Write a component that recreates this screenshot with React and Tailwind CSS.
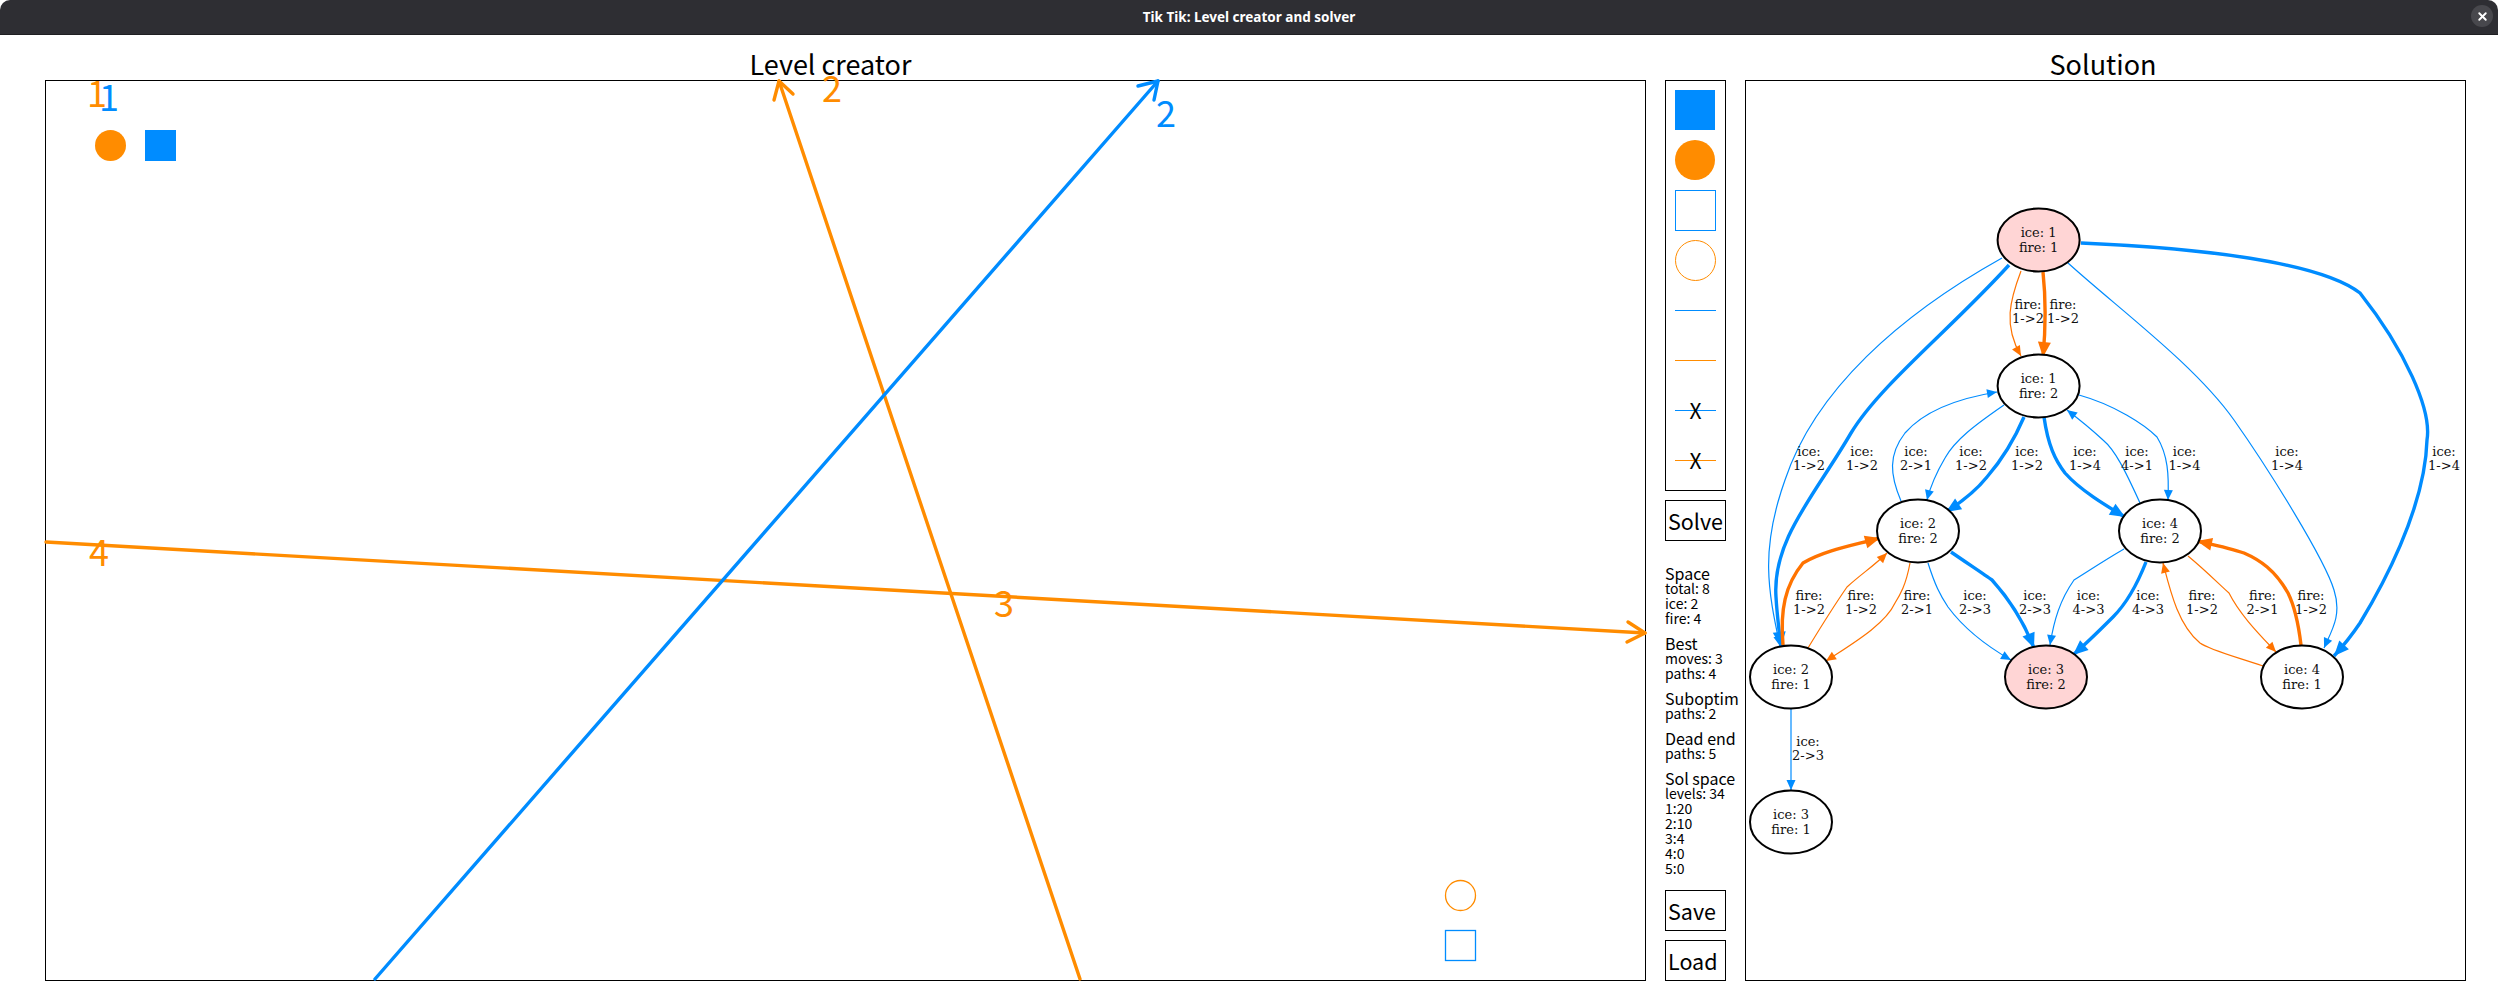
import React from "react"
import { X } from "lucide-react"

const BLUE = "#008cff"
const ORANGE = "#ff8c00"
const EDGE_ORANGE = "#ff7300"

// graph edges: colour, thick?, path
const edges = [
  ["b", 0, "M2002 258 C1900 315 1815 390 1785 480 C1760 550 1768 590 1780 646"],
  ["b", 1, "M2009 265 C1950 330 1880 385 1851 433 C1815 495 1772 540 1776 597 C1777 615 1779 630 1781 647"],
  ["o", 0, "M2021 271 C2010 300 2003 325 2021 356"],
  ["o", 1, "M2043 272 C2046 300 2046 325 2043 357"],
  ["b", 0, "M2068 263 C2120 310 2195 365 2234 420 C2270 471 2325 560 2334 590 C2342 615 2332 630 2324 648"],
  ["b", 1, "M2081 243 C2200 248 2320 262 2360 293 C2405 350 2432 410 2427 440 C2425 510 2380 590 2360 623 C2352 635 2344 645 2334 656"],
  ["b", 0, "M1901 501 C1890 475 1888 455 1905 433 C1925 410 1960 398 1997 392"],
  ["b", 0, "M2004 405 C1975 425 1955 440 1945 458 C1935 475 1930 488 1927 500"],
  ["b", 1, "M2024 417 C2012 445 2000 462 1987 477 C1975 492 1960 503 1946 512"],
  ["b", 1, "M2044 417 C2048 445 2055 460 2065 473 C2080 490 2105 505 2125 517"],
  ["b", 0, "M2140 503 C2125 470 2115 450 2103 440 C2090 428 2080 420 2067 410"],
  ["b", 0, "M2079 395 C2115 405 2145 425 2157 437 C2168 455 2169 475 2168 500"],
  ["o", 1, "M1783 645 C1780 610 1785 585 1803 563 C1825 550 1855 545 1880 538"],
  ["o", 0, "M1808 648 C1825 620 1838 600 1847 587 C1860 575 1875 565 1887 553"],
  ["o", 0, "M1910 563 C1906 585 1900 595 1895 603 C1885 625 1850 645 1826 661"],
  ["b", 0, "M1928 563 C1935 585 1940 595 1948 607 C1965 630 1990 648 2011 660"],
  ["b", 1, "M1951 552 C1970 565 1985 575 1992 580 C2010 600 2025 625 2034 648"],
  ["b", 0, "M2124 549 C2105 560 2090 570 2074 580 C2060 600 2054 620 2050 645"],
  ["b", 1, "M2146 562 C2135 590 2125 605 2113 617 C2100 630 2088 642 2073 655"],
  ["o", 0, "M2263 666 C2230 655 2210 650 2200 643 C2178 625 2170 590 2163 563"],
  ["o", 0, "M2188 556 C2205 570 2220 585 2229 593 C2240 615 2260 635 2276 652"],
  ["o", 1, "M2301 645 C2298 620 2294 605 2288 593 C2275 570 2260 560 2244 553 C2230 548 2215 545 2197 541"],
  ["b", 0, "M1791 709 L1791 790"],
]

const nodes = [
  [2038.6, 240, "ice: 1", "fire: 1", true],
  [2038.6, 386, "ice: 1", "fire: 2", false],
  [1918, 531, "ice: 2", "fire: 2", false],
  [2160, 531, "ice: 4", "fire: 2", false],
  [1791, 677, "ice: 2", "fire: 1", false],
  [2046, 677, "ice: 3", "fire: 2", true],
  [2302, 677, "ice: 4", "fire: 1", false],
  [1791, 822, "ice: 3", "fire: 1", false],
]

const labels = [
  [1809, 452, "ice:", "1->2"],
  [1862, 452, "ice:", "1->2"],
  [1916, 452, "ice:", "2->1"],
  [1971, 452, "ice:", "1->2"],
  [2027, 452, "ice:", "1->2"],
  [2085, 452, "ice:", "1->4"],
  [2137, 452, "ice:", "4->1"],
  [2184.5, 452, "ice:", "1->4"],
  [2287, 452, "ice:", "1->4"],
  [2444, 452, "ice:", "1->4"],
  [2028, 305, "fire:", "1->2"],
  [2063, 305, "fire:", "1->2"],
  [1809, 596, "fire:", "1->2"],
  [1861, 596, "fire:", "1->2"],
  [1917, 596, "fire:", "2->1"],
  [1975, 596, "ice:", "2->3"],
  [2035, 596, "ice:", "2->3"],
  [2088.5, 596, "ice:", "4->3"],
  [2148, 596, "ice:", "4->3"],
  [2202, 596, "fire:", "1->2"],
  [2262.5, 596, "fire:", "2->1"],
  [2311, 596, "fire:", "1->2"],
  [1808, 742, "ice:", "2->3"],
]

const stats = [
  ["Space", "total: 8", "ice: 2", "fire: 4"],
  ["Best", "moves: 3", "paths: 4"],
  ["Suboptim", "paths: 2"],
  ["Dead end", "paths: 5"],
  ["Sol space", "levels: 34", "1:20", "2:10", "3:4", "4:0", "5:0"],
]

function Marker({ id, color, w, h }) {
  return (
    <marker id={id} markerUnits="userSpaceOnUse" markerWidth={w} markerHeight={h} refX={w} refY={h / 2} orient="auto" overflow="visible">
      <path d={`M0 0L${w} ${h / 2}L0 ${h}Z`} fill={color} />
    </marker>
  )
}

function CanvasDrawing() {
  return (
    <svg viewBox="46 81 1599 899" className="block w-full h-full overflow-visible" fill="none">
      <g stroke={ORANGE} strokeWidth="3.4" strokeLinecap="round" strokeLinejoin="round">
        <path d="M1080 979L779 81" />
        <path d="M774 100L779 81L793 94" />
        <path d="M46 542L1645 633" />
        <path d="M1628 622L1645 633L1627 642" />
      </g>
      <g stroke={BLUE} strokeWidth="3.4" strokeLinecap="round" strokeLinejoin="round">
        <path d="M375 979L1158 81" />
        <path d="M1138 86L1158 81L1154 100" />
      </g>
      <g fontFamily="'Noto Sans CJK SC', sans-serif" fontSize="36" textAnchor="middle">
        <text x="97" y="107" fill={ORANGE}>1</text>
        <text x="109" y="111" fill={BLUE}>1</text>
        <text x="832" y="102" fill={ORANGE}>2</text>
        <text x="1166" y="127" fill={BLUE}>2</text>
        <text x="1004" y="617" fill={ORANGE}>3</text>
        <text x="99" y="566" fill={ORANGE}>4</text>
      </g>
      <circle cx="110.5" cy="145.5" r="15.5" fill={ORANGE} />
      <rect x="145" y="130" width="31" height="31" fill={BLUE} />
      <circle cx="1460.5" cy="895.5" r="15" stroke={ORANGE} strokeWidth="1.3" />
      <rect x="1445.5" y="930.5" width="30" height="30" stroke={BLUE} strokeWidth="1.3" />
    </svg>
  )
}

function GraphDrawing() {
  return (
    <svg viewBox="1746 81 719 899" className="block w-full h-full" fill="none">
      <defs>
        <Marker id="b0" color={BLUE} w={10} h={9} />
        <Marker id="b1" color={BLUE} w={15} h={13} />
        <Marker id="o0" color={EDGE_ORANGE} w={10} h={9} />
        <Marker id="o1" color={EDGE_ORANGE} w={15} h={13} />
      </defs>
      {edges.map(([c, thick, d], i) => (
        <path
          key={i}
          d={d}
          stroke={c === "b" ? BLUE : EDGE_ORANGE}
          strokeWidth={thick ? 3.4 : 1.2}
          markerEnd={`url(#${c}${thick})`}
        />
      ))}
      {nodes.map(([x, y, a, b, pink], i) => (
        <g key={i}>
          <ellipse cx={x} cy={y} rx="41" ry="31.5" fill={pink ? "#ffd5d5" : "#ffffff"} stroke="#000" strokeWidth="2" />
          <g fontFamily="'DejaVu Serif', serif" fontSize="13" fill="#111" textAnchor="middle">
            <text x={x} y={y - 3}>{a}</text>
            <text x={x} y={y + 12}>{b}</text>
          </g>
        </g>
      ))}
      <g fontFamily="'DejaVu Serif', serif" fontSize="13" fill="#111" textAnchor="middle">
        {labels.map(([x, y, a, b], i) => (
          <g key={i}>
            <text x={x} y={y + 4}>{a}</text>
            <text x={x} y={y + 18}>{b}</text>
          </g>
        ))}
      </g>
    </svg>
  )
}

function Button({ children }) {
  return <div className="h-[41px] border border-black flex items-center px-[2px] text-[21.5px] leading-none text-black">{children}</div>
}

export default function App() {
  return (
    <div className="w-[2498px] h-[996px] bg-white overflow-hidden font-['Noto_Sans_CJK_SC',sans-serif] text-black">
      <div className="h-[35px] bg-[#2e2e33] border-b border-[#1f1f22] rounded-t-[10px] relative flex items-center justify-center">
        <span className="font-['Noto_Sans',sans-serif] text-[13.5px] font-bold text-white">Tik Tik: Level creator and solver</span>
        <div className="absolute right-[5px] top-[5px] w-[22px] h-[22px] rounded-full bg-[#48484d] flex items-center justify-center">
          <X size={13} color="#fff" strokeWidth={3.5} />
        </div>
      </div>

      <div className="flex pl-[45px] h-[961px]">
        <div className="w-[1601px] flex flex-col">
          <div className="h-[45px] pt-[10px] pr-[30px] text-center text-[27px] leading-[38px]">Level creator</div>
          <div className="h-[901px] border border-black">
            <CanvasDrawing />
          </div>
        </div>

        <div className="w-[61px] ml-[19px] pt-[45px] flex flex-col">
          <div className="h-[411px] border border-black pt-[9px] px-[9px] flex flex-col gap-[10px]">
            <div className="w-[40px] h-[40px] bg-[#008cff]" />
            <div className="w-[40px] h-[40px] rounded-full bg-[#ff8c00]" />
            <div className="w-[41px] h-[41px] -mb-px border border-[#008cff]" />
            <div className="w-[41px] h-[41px] -mb-px border border-[#ff8c00] rounded-full" />
            <div className="w-[41px] h-[40px] flex items-center"><div className="w-full h-px bg-[#008cff]" /></div>
            <div className="w-[41px] h-[40px] flex items-center"><div className="w-full h-px bg-[#ff8c00]" /></div>
            <div className="w-[41px] h-[40px] relative flex items-center">
              <div className="w-full h-px bg-[#008cff]" />
              <span className="absolute inset-0 flex items-center justify-center text-[21px] leading-none">X</span>
            </div>
            <div className="w-[41px] h-[40px] relative flex items-center">
              <div className="w-full h-px bg-[#ff8c00]" />
              <span className="absolute inset-0 flex items-center justify-center text-[21px] leading-none">X</span>
            </div>
          </div>

          <div className="mt-[9px]"><Button><span className="w-full text-center">Solve</span></Button></div>

          <div className="mt-[25px] w-[90px] flex flex-col gap-[10px]">
            {stats.map(([head, ...rows]) => (
              <div key={head}>
                <div className="text-[16px] leading-[15px]">{head}</div>
                {rows.map((r) => (
                  <div key={r} className="text-[14px] leading-[15px]">{r}</div>
                ))}
              </div>
            ))}
          </div>

          <div className="mt-auto mb-[15px] flex flex-col gap-[9px]">
            <Button>Save</Button>
            <Button>Load</Button>
          </div>
        </div>

        <div className="w-[721px] ml-[19px] flex flex-col">
          <div className="h-[45px] pt-[10px] pr-[5px] text-center text-[27px] leading-[38px]">Solution</div>
          <div className="h-[901px] border border-black">
            <GraphDrawing />
          </div>
        </div>
      </div>
    </div>
  )
}
